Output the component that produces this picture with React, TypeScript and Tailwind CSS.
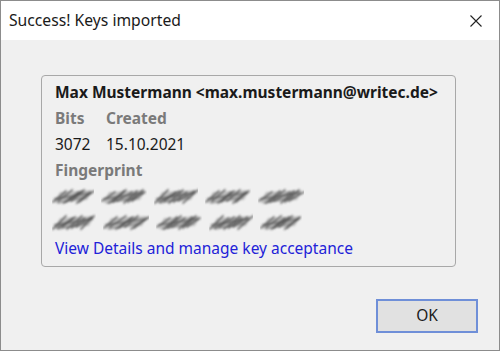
import type { ReactNode } from "react";

const rowOne = [
  { w: 42, seed: 1 },
  { w: 46, seed: 2 },
  { w: 44, seed: 3 },
  { w: 46, seed: 4 },
  { w: 46, seed: 5 },
];

const rowTwo = [
  { w: 44, seed: 6 },
  { w: 46, seed: 7 },
  { w: 46, seed: 8 },
  { w: 44, seed: 9 },
  { w: 42, seed: 10 },
];

function Smudge({ w, seed }: { w: number; seed: number }) {
  // blurred scribble that hides the fingerprint group
  const strokes = [0, 1, 2, 3, 4, 5, 6].map((i) => {
    const x = 1 + i * ((w - 16) / 6) + ((seed * (i + 3)) % 3);
    return {
      x1: x,
      y1: 16 - ((seed + i) % 3),
      x2: x + 13 + ((seed * i) % 4),
      y2: 3 + ((seed + i * 2) % 3),
    };
  });
  const id = `blur-${seed}`;
  return (
    <svg width={w} height={20} viewBox={`0 0 ${w} 20`} className="shrink-0">
      <defs>
        <filter id={id} x="-20%" y="-40%" width="140%" height="180%">
          <feGaussianBlur stdDeviation="1.1" />
        </filter>
      </defs>
      <g filter={`url(#${id})`} strokeLinecap="round">
        <path
          d={`M2 16 L8 5 L${w - 2} 3 L${w - 7} 13 Z`}
          fill="#b4b4b4"
          opacity="0.75"
        />
        <path d={`M3 12 L${w - 4} 6`} stroke="#5a5a5a" strokeWidth="2.4" opacity="0.6" />
        <path d={`M6 16 L${w - 9} 10`} stroke="#6a6a6a" strokeWidth="2" opacity="0.5" />
        {strokes.map((s, i) => (
          <line
            key={i}
            x1={s.x1}
            y1={s.y1}
            x2={s.x2}
            y2={s.y2}
            stroke="#4a4a4a"
            strokeWidth="1.8"
            opacity="0.75"
          />
        ))}
      </g>
    </svg>
  );
}

function Line({ children, className = "" }: { children: ReactNode; className?: string }) {
  return <div className={`flex h-[26px] items-center ${className}`}>{children}</div>;
}

export default function App() {
  return (
    <div
      className="flex h-[351px] w-[500px] flex-col border border-[#8c8c8c] bg-[#f0f0f0] text-[#1a1a1a]"
      style={{ fontFamily: '"Noto Sans", "Open Sans", sans-serif' }}
    >
      <div className="flex h-[39px] shrink-0 items-center justify-between bg-white pl-[8px] pr-[17px]">
        <span className="text-[15.7px] text-[#1a1a1a]">Success! Keys imported</span>
        <svg width="12" height="12" viewBox="0 0 12 12" className="mt-[1px]">
          <path d="M0.5 0.5 L11.5 11.5 M11.5 0.5 L0.5 11.5" stroke="#222" strokeWidth="1.1" />
        </svg>
      </div>

      <div className="flex flex-1 flex-col pl-[40px] pr-[20px] pt-[35px]">
        <div className="flex h-[192px] w-[415px] flex-col rounded-[4px] border border-[#a8a8a8] pl-[13px] pt-[4px] text-[15.5px]">
          <Line className="font-bold">Max Mustermann &lt;max.mustermann@writec.de&gt;</Line>
          <Line className="gap-[13px] font-bold text-[#7a7a7a]">
            <span className="w-[38px]">Bits</span>
            <span>Created</span>
          </Line>
          <Line className="gap-[13px]">
            <span className="w-[38px]">3072</span>
            <span>15.10.2021</span>
          </Line>
          <Line className="font-bold text-[#7a7a7a]">Fingerprint</Line>
          <Line className="-ml-[3px] gap-[7px]">
            {rowOne.map((b) => (
              <Smudge key={b.seed} w={b.w} seed={b.seed} />
            ))}
          </Line>
          <Line className="-ml-[3px] gap-[7px]">
            {rowTwo.map((b) => (
              <Smudge key={b.seed} w={b.w} seed={b.seed} />
            ))}
          </Line>
          <Line className="text-[#2222d8]">View Details and manage key acceptance</Line>
        </div>

        <div className="mt-[32px] flex justify-end pr-[1px]">
          <button className="h-[34px] w-[102px] border-2 border-[#6f8fd8] bg-[#e1e1e1] text-[15.5px] text-[#1a1a1a]">
            OK
          </button>
        </div>
      </div>
    </div>
  );
}
